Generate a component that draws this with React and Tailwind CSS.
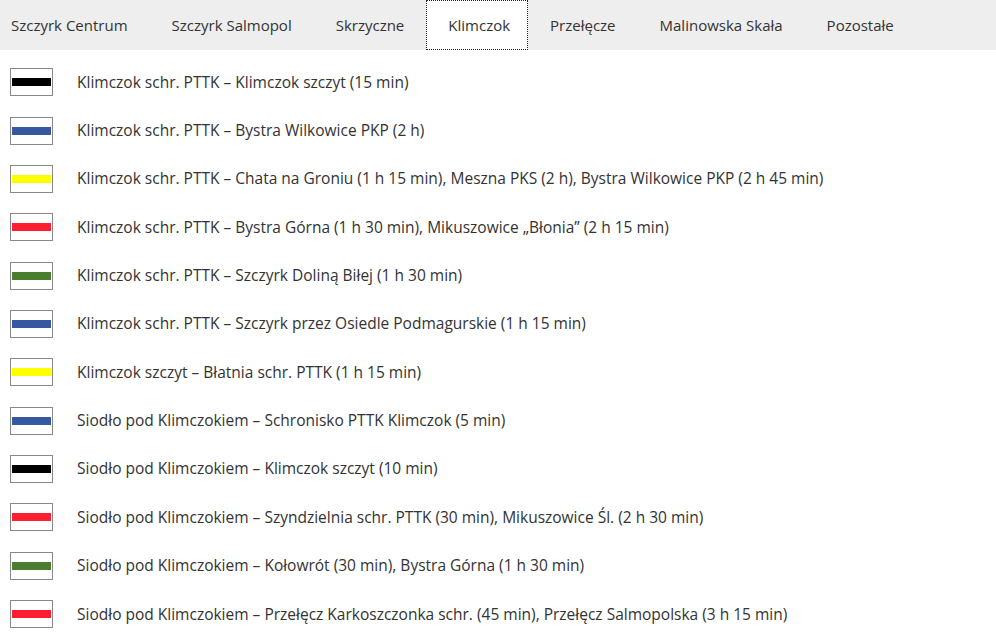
const tabs = [
  'Szczyrk Centrum',
  'Szczyrk Salmopol',
  'Skrzyczne',
  'Klimczok',
  'Przełęcze',
  'Malinowska Skała',
  'Pozostałe',
];

const trails = [
  ['bg-[#000000]', 'Klimczok schr. PTTK – Klimczok szczyt (15 min)'],
  ['bg-[#36589f]', 'Klimczok schr. PTTK – Bystra Wilkowice PKP (2 h)'],
  ['bg-[#ffff00]', 'Klimczok schr. PTTK – Chata na Groniu (1 h 15 min), Meszna PKS (2 h), Bystra Wilkowice PKP (2 h 45 min)'],
  ['bg-[#ff1f30]', 'Klimczok schr. PTTK – Bystra Górna (1 h 30 min), Mikuszowice „Błonia” (2 h 15 min)'],
  ['bg-[#4a7d2c]', 'Klimczok schr. PTTK – Szczyrk Doliną Biłej (1 h 30 min)'],
  ['bg-[#36589f]', 'Klimczok schr. PTTK – Szczyrk przez Osiedle Podmagurskie (1 h 15 min)'],
  ['bg-[#ffff00]', 'Klimczok szczyt – Błatnia schr. PTTK (1 h 15 min)'],
  ['bg-[#36589f]', 'Siodło pod Klimczokiem – Schronisko PTTK Klimczok (5 min)'],
  ['bg-[#000000]', 'Siodło pod Klimczokiem – Klimczok szczyt (10 min)'],
  ['bg-[#ff1f30]', 'Siodło pod Klimczokiem – Szyndzielnia schr. PTTK (30 min), Mikuszowice Śl. (2 h 30 min)'],
  ['bg-[#4a7d2c]', 'Siodło pod Klimczokiem – Kołowrót (30 min), Bystra Górna (1 h 30 min)'],
  ['bg-[#ff1f30]', 'Siodło pod Klimczokiem – Przełęcz Karkoszczonka schr. (45 min), Przełęcz Salmopolska (3 h 15 min)'],
];

export default function App() {
  return (
    <div className="min-h-screen bg-white text-[#333] font-['Open_Sans',sans-serif]">
      <nav className="flex h-[50px] bg-[#eeeeee] pl-[10px] text-[15px]">
        {tabs.map((t, i) => (
          <div
            key={t}
            className={
              (i === 3
                ? 'border border-dotted border-[#222] bg-white pl-[21px] pr-[17px] '
                : 'border border-transparent px-[21px] ') +
              (i === 0 ? 'pl-0 ' : '') +
              'flex items-center'
            }
          >
            {t}
          </div>
        ))}
      </nav>
      <ul className="pt-2 text-[15.5px]">
        {trails.map(([color, text], i) => (
          <li key={i} className="flex h-[48.36px] items-center">
            <div className="ml-[10px] flex h-[28px] w-[43px] shrink-0 items-center border border-[#888] bg-white px-px">
              <div className={'h-2 w-full ' + color} />
            </div>
            <span className="ml-6 whitespace-nowrap">{text}</span>
          </li>
        ))}
      </ul>
    </div>
  );
}
